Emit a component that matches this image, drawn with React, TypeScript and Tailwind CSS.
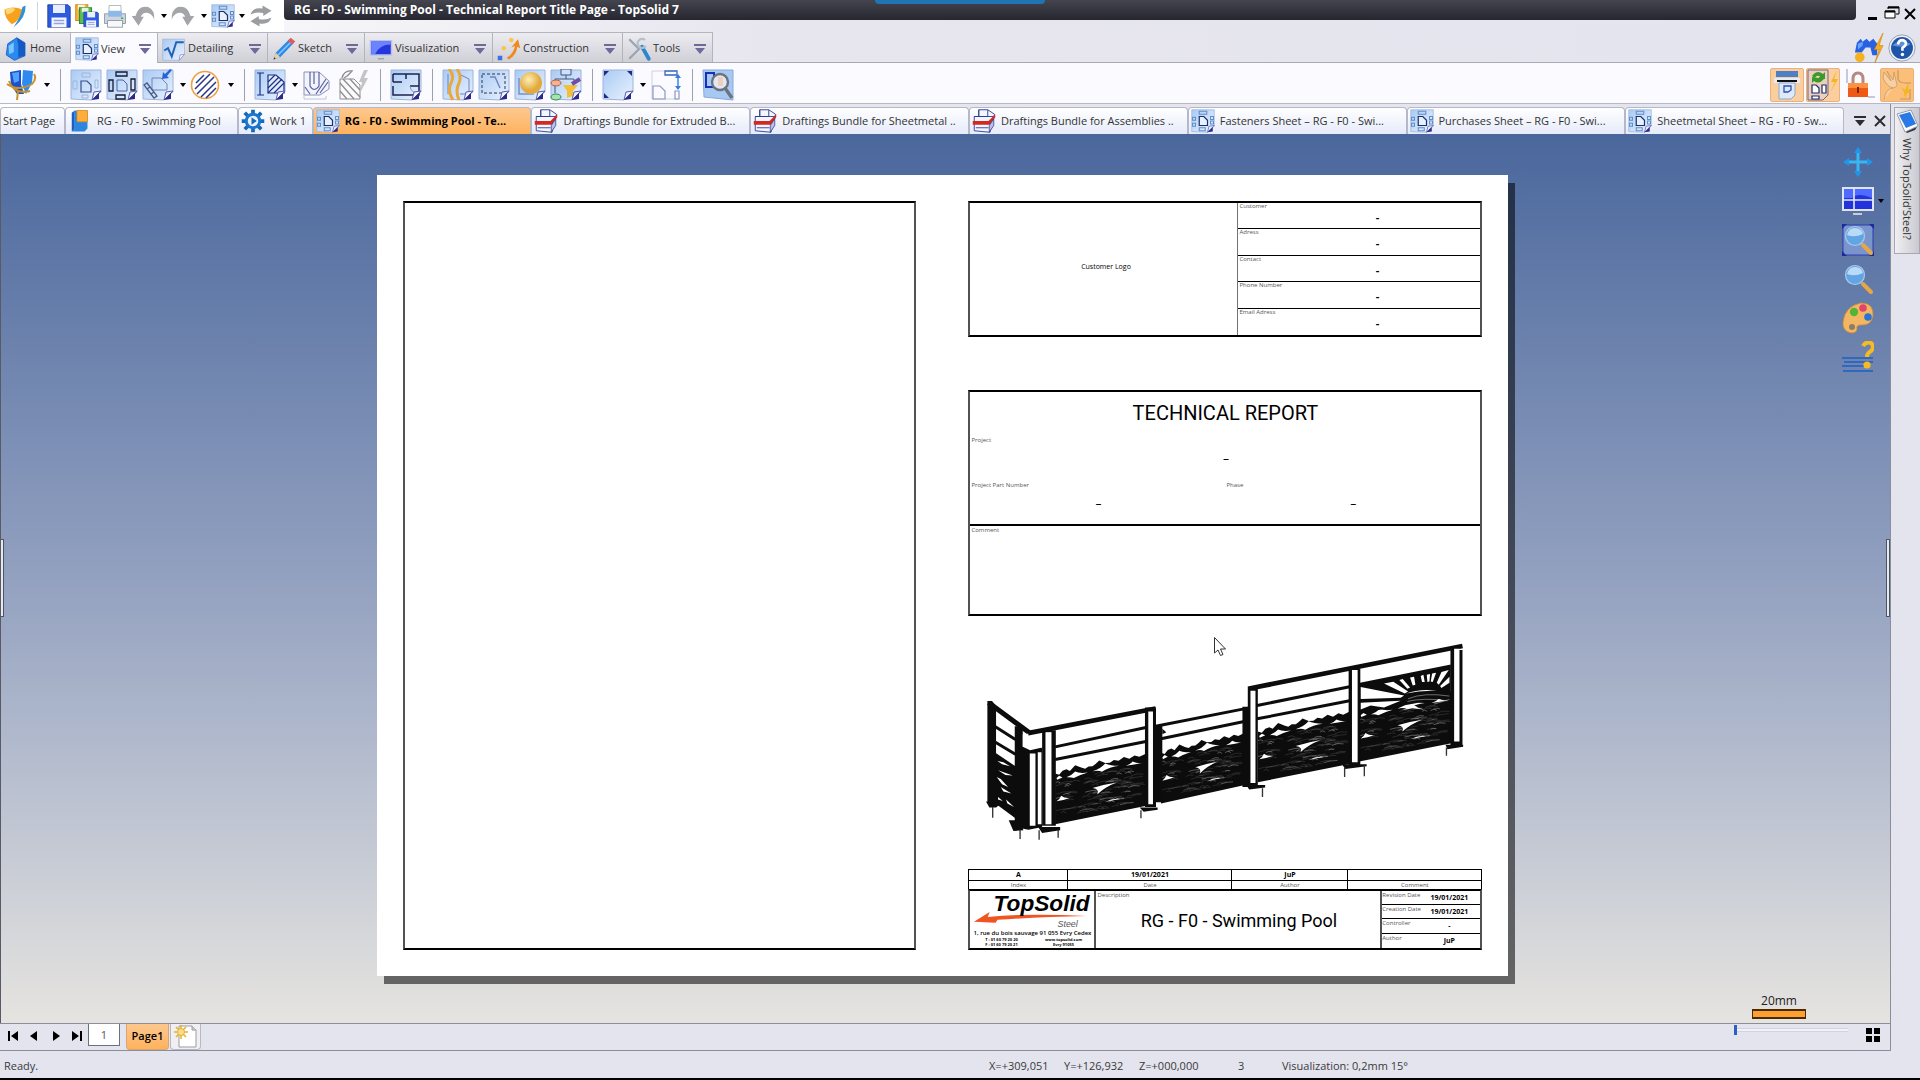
import React, { useState } from "react";

type IconProps = { className?: string; children?: React.ReactNode };

/* ---------- icons ---------- */

const Svg = ({ className = "size-8", children }: IconProps) => (
  <svg viewBox="0 0 32 32" className={`${className} shrink-0`} fill="none" aria-hidden="true">
    {children}
  </svg>
);

const Paper = ({ className, children }: IconProps) => (
  <Svg className={className}>
    <path d="M1 1H31V23L22 31L1 30Z" fill="url(#paper)" stroke="#9db4dc" />
    {children}
    <path d="M22 31L24 23L31 22Z" fill="#eef3ff" stroke="#5a5fb0" strokeWidth="1" />
    <path d="M22 31L29 24V30Z" fill="#2b2a86" />
  </Svg>
);

const DraftIcon = ({ className }: IconProps) => (
  <Paper className={className}>
    <path d="M11 3H21V7H11ZM11 25H19V29H11ZM2 11H6V15H2ZM2 19H6V23H2ZM26 10H30V14H26ZM26 16H30V20H26Z" stroke="#5f8fc9" strokeWidth="1.4" />
    <path d="M11 10H17L22 15V22H11Z" stroke="#1b2f6b" strokeWidth="1.6" fill="#e8f1ff" />
  </Paper>
);

const BundleIcon = () => (
  <Svg className="size-6">
    <path d="M9 1H21L30 7L24 31L3 29V10H9Z" fill="#f3f5ff" stroke="#2f3b8f" strokeWidth="1.2" />
    <path d="M9 1V10H21V1M3 10H28M5 25H22" stroke="#2f3b8f" strokeWidth="1.2" />
    <path d="M1 16H22L31 7V11L24 21H1Z" fill="#d42a1e" />
    <path d="M23 22L29 13V22L23 31Z" fill="#b9bfe8" stroke="#2f3b8f" />
  </Svg>
);

const GearIcon = () => (
  <Svg className="size-6">
    <g stroke="#1668b8" strokeWidth="5">
      <path d="M16 1V31M1 16H31M5 5L27 27M27 5L5 27" />
    </g>
    <circle cx="16" cy="16" r="11" fill="#1d76cc" />
    <circle cx="16" cy="16" r="7" fill="#e8f4ff" />
    <path d="M14 11L21 16L14 21Z" fill="#1668b8" />
  </Svg>
);

const BookIcon = () => (
  <Svg className="size-6">
    <path d="M5 5L9 2V27L5 30Z" fill="#1a5fc0" />
    <path d="M9 2H26V26L22 30H5L9 27Z" fill="#2c86e0" />
    <path d="M12 2H26V17H12Z" fill="#ffae3d" stroke="#e58a12" />
  </Svg>
);

const HomeIcon = () => (
  <Svg className="size-6">
    <path d="M5 9L17 1L28 8V25L14 31L3 24Z" fill="#2a8af0" stroke="#0f52b8" />
    <path d="M17 1L28 8V25L19 27V11Z" fill="#1559c4" />
    <path d="M6 12L13 7V20L7 23Z" fill="#7cc6ff" />
  </Svg>
);

const RootIcon = () => (
  <Svg className="size-6">
    <path d="M1 3H30V23L23 31H1Z" fill="url(#paper)" stroke="#9db4dc" />
    <path d="M3 18L8 15L13 26L19 7H29" stroke="#1f62b5" strokeWidth="2.6" />
    <path d="M23 31L24 24L30 23Z" fill="#fff" stroke="#7d86c8" />
  </Svg>
);

const PencilIcon = () => (
  <Svg className="size-6">
    <path d="M2 30L5 21L23 3L29 8L11 27Z" fill="#2c8be6" />
    <path d="M8 24L26 6" stroke="#8dc8ff" strokeWidth="2" />
    <path d="M21 5L25 1L31 6L27 10Z" fill="#e25a5a" />
    <path d="M2 30L5 21L11 27Z" fill="#ead0a0" />
    <path d="M2 30L3 27L5 29Z" fill="#333" />
  </Svg>
);

const ScreenIcon = () => (
  <Svg className="size-6">
    <path d="M1 4H31V25H1Z" fill="#b9c3ea" />
    <path d="M3 6H29V23H3Z" fill="#2536dd" />
    <path d="M3 6H29V10Q14 10 8 23H3Z" fill="#6b83ff" />
    <path d="M12 28H20V30H12Z" fill="#9aa" />
  </Svg>
);

const BuildIcon = () => (
  <Svg className="size-6">
    <path d="M13 28Q22 22 24 12L19 14L28 3L31 15L27 13Q26 24 16 30Z" fill="#f08a1d" />
    <circle cx="19" cy="4" r="3" fill="#f7c64a" />
    <circle cx="9" cy="15" r="3" fill="#f7c64a" />
    <path d="M1 25H7V31H1Z" fill="#3d6fe0" />
  </Svg>
);

const ToolsIcon = () => (
  <Svg className="size-6">
    <path d="M3 3L16 16L3 29" stroke="#9aa4b4" strokeWidth="3" />
    <path d="M20 13L29 29" stroke="#2b86cf" strokeWidth="5" strokeLinecap="round" />
    <path d="M24 4A6 6 0 1 0 25 12" stroke="#b9bec8" strokeWidth="3" />
  </Svg>
);

const LogoIcon = () => (
  <Svg className="h-7 w-[26px]">
    <path d="M3 8Q14 3 25 8Q24 21 12 26Q3 19 3 8Z" fill="#f7a11c" />
    <path d="M4 8Q10 5 16 7Q15 12 6 14Z" fill="#ffd777" />
    <path d="M29 3Q30 18 14 30Q24 16 25 5Z" fill="#2b93d6" />
  </Svg>
);

const Floppy = ({ x = 0, y = 0, s = 1, color = "#2c5be0" }) => (
  <g transform={`translate(${x} ${y}) scale(${s})`}>
    <path d="M1 1H28L31 4V31H1Z" fill={color} stroke="#1b338f" />
    <path d="M8 1H24V12H8Z" fill="#e9eefc" />
    <path d="M6 18H26V31H6Z" fill="#f4f7ff" />
    <path d="M9 22H23M9 26H23" stroke="#90a5dd" strokeWidth="2" />
  </g>
);

const SaveIcon = () => (
  <Svg className="size-6">
    <Floppy />
  </Svg>
);

const SaveAllIcon = () => (
  <Svg className="size-6">
    <path d="M1 1H17V22H1Z" fill="#f2b64a" stroke="#d68a1c" strokeWidth="1.5" />
    <path d="M4 1H13V7H4Z" fill="#fff3d6" />
    <path d="M6 5H22V26H6Z" fill="#5fbd55" stroke="#2f8f2f" strokeWidth="1.5" />
    <path d="M9 5H18V11H9Z" fill="#e2f6de" />
    <Floppy x={11} y={10} s={0.66} />
  </Svg>
);

const PrinterIcon = () => (
  <Svg className="size-6">
    <path d="M8 2H24V14H8Z" fill="#fff" stroke="#9aa" />
    <path d="M2 13H30V26H2Z" fill="#cfd5de" stroke="#7f8894" />
    <path d="M7 9H25V17H7Z" fill="#8fb8ea" />
    <path d="M6 22H26V31H6Z" fill="#f6f8fa" stroke="#7f8894" />
    <path d="M24 18H27V20H24Z" fill="#3fae3f" />
  </Svg>
);

const UndoIcon = ({ flip = false }) => (
  <Svg className={flip ? "size-6 -scale-x-100" : "size-6"}>
    <path d="M1 16L10 29L17 17L13 17Q16 10 23 12Q29 14 31 21Q32 8 23 4Q10 1 6 16Z" fill="#a3a5a8" />
  </Svg>
);

const RefreshIcon = () => (
  <Svg className="size-6">
    <path d="M2 14Q5 4 18 6V2L30 9L19 16V12Q9 10 2 14Z" fill="#9b9da0" />
    <path d="M30 18Q27 28 14 26V30L2 23L13 16V20Q23 22 30 18Z" fill="#9b9da0" />
  </Svg>
);

const ClampIcon = () => (
  <Svg>
    <path d="M4 3L15 1V15L18 25H11L5 16Z" fill="#1e4fc8" />
    <path d="M17 1L27 2L26 14L20 25L16 15Z" fill="#2f8af0" />
    <path d="M6 4L13 3V12L8 14Z" fill="#4da4ff" />
    <path d="M1 15Q12 23 26 15Q31 10 28 5M12 22L11 31M3 12Q8 26 24 22" stroke="#c89227" strokeWidth="2" />
  </Svg>
);

const PaperMain = () => (
  <Paper>
    <path d="M12 4H20V8H12ZM3 12H7V20H3ZM12 26H18V29H12ZM25 11H28V19H25Z" stroke="#9cb6dd" />
    <path d="M11 12H17L21 16V23H11Z" stroke="#38508f" strokeWidth="1.2" />
  </Paper>
);

const PaperViews = () => (
  <Paper>
    <path d="M10 3H21V7H10ZM3 11H7V22H3ZM10 26H19V30H10ZM25 10H29V21H25Z" stroke="#141b33" strokeWidth="1.3" />
    <path d="M11 11H17L21 15V22H11Z" stroke="#4b64a8" />
  </Paper>
);

const PaperAux = () => (
  <Paper>
    <path d="M10 9H19L25 15V21H10Z" stroke="#6c84bb" />
    <path d="M2 16L5 14L15 27L12 29ZM5 20L8 18M9 25L12 23" stroke="#4c5b86" strokeWidth="1.3" />
    <path d="M30 1L25 7L27 9L20 10L21 3L23 5L28 0Z" fill="#2466d8" />
  </Paper>
);

const HatchCircle = () => (
  <Svg>
    <circle cx="15" cy="16" r="13.5" stroke="#f0a040" strokeWidth="1.6" fill="#fff" />
    <path d="M6 14L14 6M5 20L20 5M7 25L24 8M11 28L26 13M16 29L26 19" stroke="#27358c" strokeWidth="1.5" />
  </Svg>
);

const SectionIcon = () => (
  <Paper>
    <path d="M3 4H10M3 26H10M6 4V26" stroke="#1c2f86" strokeWidth="1.2" />
    <path d="M14 6H22L30 13V24H14Z" fill="#dfe9ff" stroke="#1c2f86" strokeWidth="1.2" />
    <path d="M14 13L21 6M14 19L25 8M14 24L28 10M20 24L30 14" stroke="#1c2f86" strokeWidth="1.2" />
  </Paper>
);

const CutIcon = () => (
  <Svg>
    <path d="M2 3H17L27 12V20L18 26H2Z" fill="#f2f3fb" stroke="#8b90ba" />
    <path d="M8 3V17Q12 24 17 17V3M12 3V15M3 18L8 25M18 24L26 13M14 25L24 10" stroke="#5b61a4" strokeWidth="1.2" />
    <path d="M2 26V30H24V27" stroke="#c0c3da" />
  </Svg>
);

const GreyHatchIcon = () => (
  <Svg>
    <path d="M2 10H16L22 16V30H2Z" stroke="#8d8d8d" />
    <path d="M2 14L16 30M2 22L9 30M5 10L22 28M12 10L22 21M4 9Q6 1 14 2Q10 7 6 9" stroke="#8d8d8d" strokeWidth="1.3" />
    <path d="M30 1L26 9H30L22 24L24 13H21L26 1Z" fill="#c4c4c4" />
  </Svg>
);

const PlanIcon = () => (
  <Paper>
    <path d="M3 5H29V26H3V17M3 13V5M3 13H12M16 5V10M20 17H29" stroke="#1c2250" strokeWidth="1.5" />
    <path d="M20 17Q21 24 28 24" stroke="#7f95cc" />
  </Paper>
);

const BreakIcon = () => (
  <Paper>
    <path d="M17 5L27 10V25H18M6 5V25" stroke="#6d83c0" />
    <path d="M7 0Q13 6 9 14Q5 22 11 31M15 0Q20 7 17 14Q13 22 17 31" stroke="#e9a93a" strokeWidth="3" />
  </Paper>
);

const DashedIcon = () => (
  <Paper>
    <path d="M4 5H27V24H4Z" stroke="#30364f" strokeDasharray="3 2" />
    <path d="M12 8H17L22 19" stroke="#6d83c0" strokeWidth="1.4" />
  </Paper>
);

const SphereIcon = () => (
  <Paper>
    <path d="M5 9V25H20" stroke="#7a90c9" strokeWidth="1.5" />
    <circle cx="17" cy="14" r="11" fill="url(#gold)" />
  </Paper>
);

const FlowIcon = () => (
  <Paper>
    <path d="M11 0H21V6H11ZM16 6V10M5 10H24V15M5 10V24" stroke="#3f567f" fill="#cfe0fa" />
    <ellipse cx="6" cy="14" rx="5" ry="3" fill="#f3b294" stroke="#b8613c" />
    <ellipse cx="6" cy="28" rx="5" ry="3" fill="#a6e2b2" stroke="#328c4c" />
    <path d="M13 16H28L23 22V27L17 29V22Z" fill="#f3bf38" />
    <path d="M22 15L30 10" stroke="#6d4ea8" strokeWidth="4" />
  </Paper>
);

const FrameIcon = () => (
  <Paper>
    <path d="M2 2H7L2 7ZM30 2V7L25 2ZM2 29V24L7 29Z" fill="#1f2b86" />
  </Paper>
);

const MoveTitleIcon = () => (
  <Svg>
    <path d="M2 2V30H28M2 2H16" stroke="#cfcfe0" />
    <path d="M15 2H27V6H15Z" stroke="#3563c4" strokeWidth="1.3" />
    <path d="M28 6V19" stroke="#2f7de0" strokeWidth="1.4" />
    <path d="M25 9L28 5L31 9ZM25 17L28 21L31 17Z" fill="#2f7de0" />
    <path d="M3 17H10L15 22V30H3ZM25 22H29V30H25Z" stroke="#8798c6" strokeWidth="1.2" />
  </Svg>
);

const InspectIcon = () => (
  <Svg>
    <path d="M1 1H31V31L2 28Z" fill="#a8c8f4" stroke="#86a8dc" />
    <path d="M4 4H12V18H4Z" stroke="#1631b8" strokeWidth="2" />
    <circle cx="18" cy="13" r="8" fill="#dfe9f6" stroke="#6c737c" strokeWidth="2.4" />
    <path d="M16 8H21V17H16Z" fill="#f2cdbb" />
    <path d="M23 19L30 29" stroke="#6c737c" strokeWidth="3.4" />
  </Svg>
);

const PlotterIcon = () => (
  <Svg>
    <path d="M5 2H27V8H5Z" fill="#4c7fc6" />
    <path d="M3 9H29V14H3Z" fill="#e6ecf4" />
    <path d="M6 11H26V13H6Z" fill="#111" />
    <path d="M8 14H24V26L20 30H8Z" fill="#dceafc" stroke="#90a8cc" />
    <path d="M13 17H20V21L17 23H13Z" stroke="#2c4db0" strokeWidth="1.3" />
  </Svg>
);

const AutoUpdateIcon = () => (
  <Svg>
    <path d="M1 1H21V26L16 31H1Z" fill="#ead0b8" stroke="#6f6690" />
    <path d="M5 7Q10 0 16 5L18 3V10H11L13 7Q9 6 8 9ZM17 10Q12 16 7 12L5 14V8Z" fill="#3c9a2c" />
    <path d="M5 16H9L12 19V24H5ZM15 16H19V24H15ZM5 27H12V30H5Z" stroke="#1c2a70" strokeWidth="1.2" fill="#fff" />
    <path d="M30 1L24 13H28L23 24L31 10H27Z" fill="#f5b51f" />
  </Svg>
);

const LockIcon = () => (
  <Svg>
    <path d="M3 0V14M24 28H31" stroke="#8f94c8" />
    <path d="M9 15V10Q9 4 14 4Q19 4 19 10V15" stroke="#b58a82" strokeWidth="3" />
    <path d="M4 14H24V28H4Z" fill="#ee5a12" />
    <path d="M4 14H24V19H4Z" fill="#ff9142" />
    <path d="M13 18H15V24H13Z" fill="#7a2500" />
  </Svg>
);

const HandsIcon = () => (
  <Svg>
    <path d="M3 3L10 12L6 2L12 11L13 3L15 12Q18 18 12 19Q6 18 2 9ZM3 31Q4 20 12 19" fill="#f6cfa2" stroke="#d3a26c" />
    <path d="M17 1V10Q18 15 30 14M19 30H29V20" stroke="#c79665" strokeWidth="1.2" />
    <path d="M20 18L24 21L28 13L27 21L31 24L26 24L24 29L23 23Z" fill="#f5b51f" />
  </Svg>
);

const BinocularBolt = () => (
  <Svg className="size-[31px]">
    <path d="M2 20L4 10L8 6L10 9L14 6L17 9L21 6L25 11V23H20L18 15L13 15L9 20Z" fill="#2862e0" />
    <path d="M5 11L10 9V13L5 17Z" fill="#69a4ff" />
    <circle cx="7" cy="25" r="5" fill="#f6b21e" />
    <path d="M31 0L22 17H27L22 32L31 13H27Z" fill="#f7ae1c" stroke="#c9820b" strokeWidth=".6" />
  </Svg>
);

const HelpIcon = () => (
  <Svg className="size-7">
    <circle cx="16" cy="16" r="15" fill="#eef2f8" stroke="#8d97aa" />
    <circle cx="16" cy="16" r="12.5" fill="#1e55a8" />
    <path d="M5 13Q12 5 26 11Q20 17 5 13" fill="#5f90d6" />
    <path d="M11.5 12Q12 7 16.5 7Q21 8 20.5 12Q19 14 16.5 16V19" stroke="#fff" strokeWidth="3" />
    <circle cx="16.5" cy="23.5" r="2" fill="#fff" />
  </Svg>
);

const PlusArrows = () => (
  <Svg>
    <path d="M14.5 6H17.5V14.5H26V17.5H17.5V26H14.5V17.5H6V14.5H14.5Z" fill="#36b6f5" />
    <path d="M16 1L20 7H12ZM16 31L20 25H12ZM1 16L7 12V20ZM31 16L25 12V20Z" fill="#2196e8" />
  </Svg>
);

const MonitorGrid = () => (
  <Svg>
    <path d="M0 2H32V26H0Z" fill="#dfe4f4" />
    <path d="M2 4H30V24H2Z" fill="#2333dc" />
    <path d="M2 4H30V13Q16 7 10 13H2Z" fill="#4f6bff" />
    <path d="M12 4V24M2 15H30" stroke="#e4eaff" strokeWidth="1.6" />
    <path d="M11 28H20V30H11Z" fill="#c8ccd4" />
  </Svg>
);

const Magnifier = ({ framed = false }) => (
  <Svg>
    {framed && <path d="M1 1H31V31H1Z" fill="#7a95cc" stroke="#2c3bb0" />}
    {framed && <path d="M0 0H5L0 5ZM32 0V5L27 0ZM0 32V27L5 32ZM32 32H27L32 27Z" fill="#1d2a9c" />}
    <path d="M21 21L29 29" stroke="#e5a844" strokeWidth="4" strokeLinecap="round" />
    <circle cx="13" cy="12" r="9.5" fill="#62a5e4" stroke="#a9c8ea" strokeWidth="1.2" />
    <path d="M5 11Q7 3 14 4Q20 5 21 10Q13 14 5 11Z" fill="#b9dbf7" />
  </Svg>
);

const PaletteIcon = () => (
  <Svg>
    <path d="M1 20Q3 4 19 1Q32 1 31 14Q29 24 19 23Q14 23 15 27Q15 31 9 31Q0 29 1 20Z" fill="#f3b763" stroke="#c98932" strokeWidth=".8" />
    <circle cx="12" cy="10" r="4.2" fill="#54b436" />
    <circle cx="21" cy="6" r="3.8" fill="#e2456a" />
    <circle cx="26" cy="15" r="3.8" fill="#2a74d6" />
    <circle cx="10" cy="25" r="3" fill="#8f7c66" />
  </Svg>
);

const HelpLines = () => (
  <Svg>
    <path d="M0 17H31M2 21H31M0 25H28M1 30H31" stroke="#1b5fc2" strokeWidth="1.6" />
    <path d="M21 5Q24 0 29 2Q33 6 29 10Q25 12 25 16" stroke="#f6bb22" strokeWidth="4" />
    <circle cx="25" cy="24" r="3.6" fill="#f6bb22" />
  </Svg>
);

const Menu = ({ wide = false }) =>
  wide ? (
    <svg viewBox="0 0 12 10" className="h-[10px] w-3 shrink-0" aria-hidden="true">
      <path d="M0 0H12V2H0ZM1 4H11L6 10Z" fill="currentColor" />
    </svg>
  ) : (
    <svg viewBox="0 0 6 4" className="h-1 w-1.5 shrink-0" aria-hidden="true">
      <path d="M0 0H6L3 4Z" fill="#000" />
    </svg>
  );

/* ---------- ribbon ---------- */

const ribbonTabs = [
  { name: "Home", icon: <HomeIcon />, width: "w-[71px]", menu: false },
  { name: "View", icon: <DraftIcon className="size-6" />, width: "w-[87px]", menu: true },
  { name: "Detailing", icon: <RootIcon />, width: "w-[110px]", menu: true },
  { name: "Sketch", icon: <PencilIcon />, width: "w-[97px]", menu: true },
  { name: "Visualization", icon: <ScreenIcon />, width: "w-[128px]", menu: true },
  { name: "Construction", icon: <BuildIcon />, width: "w-[130px]", menu: true },
  { name: "Tools", icon: <ToolsIcon />, width: "w-[90px]", menu: true },
];

const toolGroups = [
  [{ name: "Selection", icon: <ClampIcon />, menu: true }],
  [
    { name: "Main view", icon: <PaperMain /> },
    { name: "Projected views", icon: <PaperViews /> },
    { name: "Auxiliary view", icon: <PaperAux />, menu: true },
    { name: "Detail view", icon: <HatchCircle />, menu: true },
  ],
  [
    { name: "Section view", icon: <SectionIcon />, menu: true },
    { name: "Local section", icon: <CutIcon /> },
    { name: "Update hatching", icon: <GreyHatchIcon /> },
  ],
  [{ name: "Plan view", icon: <PlanIcon /> }],
  [
    { name: "Broken view", icon: <BreakIcon /> },
    { name: "Crop view", icon: <DashedIcon /> },
    { name: "Shaded view", icon: <SphereIcon /> },
    { name: "View filter", icon: <FlowIcon /> },
  ],
  [
    { name: "Sheet format", icon: <FrameIcon />, menu: true },
    { name: "Move title", icon: <MoveTitleIcon /> },
  ],
  [{ name: "Inspect", icon: <InspectIcon /> }],
];

const docTabs = [
  { name: "Start Page", icon: null, width: "w-[65px]" },
  { name: "RG - F0 - Swimming Pool", icon: <BookIcon />, width: "w-[173px]" },
  { name: "Work 1", icon: <GearIcon />, width: "w-[75px]" },
  { name: "RG - F0 - Swimming Pool - Te...", icon: <DraftIcon className="size-6" />, width: "w-[219px]" },
  { name: "Draftings Bundle for Extruded B...", icon: <BundleIcon />, width: "w-[219px]" },
  { name: "Draftings Bundle for Sheetmetal ..", icon: <BundleIcon />, width: "w-[219px]" },
  { name: "Draftings Bundle for Assemblies ..", icon: <BundleIcon />, width: "w-[219px]" },
  { name: "Fasteners Sheet – RG - F0 - Swi...", icon: <DraftIcon className="size-6" />, width: "w-[219px]" },
  { name: "Purchases Sheet – RG - F0 - Swi...", icon: <DraftIcon className="size-6" />, width: "w-[219px]" },
  { name: "Sheetmetal Sheet – RG - F0 - Sw...", icon: <DraftIcon className="size-6" />, width: "w-[219px]" },
];

const TitleBar = () => (
  <header className="flex h-8 items-start">
    <div className="flex h-8 w-[284px] shrink-0 items-center bg-white pl-0.5">
      <LogoIcon />
      <span className="mx-[9px] h-7 w-px bg-gray-300" />
      <div className="flex items-center gap-1">
        <button aria-label="Save"><SaveIcon /></button>
        <button aria-label="Save all"><SaveAllIcon /></button>
        <button aria-label="Print"><PrinterIcon /></button>
        <button aria-label="Undo" className="flex items-center gap-1.5"><UndoIcon /><Menu /></button>
        <button aria-label="Redo" className="flex items-center gap-1.5"><UndoIcon flip /><Menu /></button>
        <button aria-label="Drafting" className="flex items-center gap-1"><DraftIcon className="size-6" /><Menu /></button>
        <button aria-label="Refresh"><RefreshIcon /></button>
      </div>
    </div>
    <div className="relative flex h-5 flex-1 justify-start rounded-b-sm bg-linear-to-b from-[#45454f] to-[#262631] pl-2.5">
      <h1 className="text-xs leading-5 font-bold whitespace-nowrap text-white">
        RG - F0 - Swimming Pool - Technical Report Title Page - TopSolid 7
      </h1>
      <span className="absolute top-0 left-[37.6%] h-1 w-[170px] rounded-b-sm bg-[#1f74b4]" />
    </div>
    <div className="flex h-6 w-16 shrink-0 items-end justify-end gap-1 pr-1 pb-1">
      <button aria-label="Minimize" className="flex h-4 w-3 items-end"><span className="h-[3px] w-[9px] bg-black" /></button>
      <button aria-label="Restore">
        <svg viewBox="0 0 16 14" className="h-[14px] w-4" fill="none" stroke="#000" aria-hidden="true">
          <path d="M4 3V1H15V8H12" />
          <path d="M1 5H11V12H1Z" fill="#fff" />
          <path d="M4 1.5H15M1 5.5H11" strokeWidth="2" />
        </svg>
      </button>
      <button aria-label="Close">
        <svg viewBox="0 0 12 12" className="size-3" stroke="#000" strokeWidth="2" aria-hidden="true">
          <path d="M1 1L11 11M11 1L1 11" />
        </svg>
      </button>
    </div>
  </header>
);

const Ribbon = () => {
  const [active, setActive] = useState("View");

  return (
    <nav className="flex h-[31px] items-stretch border-b border-[#a9a9b3]">
      {ribbonTabs.map((tab) => (
        <button
          key={tab.name}
          onClick={() => setActive(tab.name)}
          className={`${tab.width} ${
            active === tab.name ? "-mb-px bg-[#fbfbff]" : "bg-linear-to-b from-[#ececf1] to-[#cfcfd6]"
          } flex shrink-0 items-center border-t border-r border-[#b4b4bd] pt-0.5 pr-1.5 pl-1`}
        >
          {tab.icon}
          <span className="ml-0.5">{tab.name}</span>
          {tab.menu && <span className="ml-auto text-[#6c6a99]"><Menu wide /></span>}
        </button>
      ))}
      <div className="ml-auto flex items-center gap-1 pt-0.5 pr-1">
        <button aria-label="Search"><BinocularBolt /></button>
        <button aria-label="Help"><HelpIcon /></button>
      </div>
    </nav>
  );
};

const Toolbar = () => (
  <div className="flex h-[41px] items-center border-b border-[#b9b9c4] bg-[#fbfbff] pt-[3px] pl-1.5">
    {toolGroups.map((group, i) => (
      <div key={i} className="flex items-center gap-1">
        {i > 0 && <span className="mr-[5px] ml-2.5 h-8 w-px bg-gray-400" />}
        {group.map((tool: { name: string; icon: React.ReactNode; menu?: boolean }) => (
          <button key={tool.name} aria-label={tool.name} className="flex items-center gap-1.5">
            {tool.icon}
            {tool.menu && <Menu />}
          </button>
        ))}
      </div>
    ))}
    <div className="ml-auto flex items-center gap-0.5 pr-1.5">
      <button aria-label="Print preview" className="rounded-xs border border-[#e9b27c] bg-[#fbcf9d]"><PlotterIcon /></button>
      <button aria-label="Auto update" className="rounded-xs border border-[#e9b27c] bg-[#fbcf9d]"><AutoUpdateIcon /></button>
      <button aria-label="Lock" className="px-0.5"><LockIcon /></button>
      <button aria-label="Associativity" className="rounded-xs border border-[#e9b27c] bg-[#fbbf7a]"><HandsIcon /></button>
    </div>
  </div>
);

const DocumentTabs = () => {
  const [active, setActive] = useState(3);

  return (
    <div className="flex h-[30px] items-end">
      {docTabs.map((tab, i) => (
        <button
          key={i}
          onClick={() => setActive(i)}
          className={`${tab.width} ${
            i === active
              ? "bg-linear-to-b from-[#fdc88e] to-[#ffb25c] font-bold text-black"
              : "bg-linear-to-b from-white to-[#e6ebfa]"
          } flex h-[27px] shrink items-center gap-[5px] overflow-hidden rounded-t-sm border border-b-0 border-[#b4b8c8] pl-0.5 whitespace-nowrap`}
        >
          {tab.icon}
          {tab.name}
        </button>
      ))}
      <div className="flex h-[27px] shrink-0 items-center gap-2 pr-1 pl-2.5 text-[#2c2c33]">
        <button aria-label="List documents"><Menu wide /></button>
        <button aria-label="Close document">
          <svg viewBox="0 0 12 12" className="size-3" stroke="currentColor" strokeWidth="2" aria-hidden="true">
            <path d="M1 1L11 11M11 1L1 11" />
          </svg>
        </button>
      </div>
    </div>
  );
};

/* ---------- fence drawing ---------- */

// small fixed generator so the water looks the same on each render
const ripples = (() => {
  let seed = 11;
  const next = () => {
    seed = (seed * 16807) % 2147483647;
    return seed / 2147483647;
  };
  return Array.from({ length: 100 }, () => ({
    x: Math.round(next() * 230),
    y: Math.round(22 + next() * 110),
    w: Math.round(14 + next() * 30),
    h: Math.round(2 + next() * 5),
  }));
})();

const Waves = ({ x, y, width = 270 }: { x: number; y: number; width?: number }) => (
  <g transform={`translate(${x} ${y}) scale(${width / 270} 1) skewY(-11.5)`}>
    <path
      d="M0 -4L12 2L22 -8L34 -10L44 -3Q52 -10 60 -17L78 -6L90 0L100 -5L112 -3Q122 -8 132 -16L150 -5L164 -3L176 -9L190 -4L206 -12L222 -3L238 -10L252 -3L270 -8V148H0Z"
      fill="#0c0c0c"
    />
    <g fill="#fff">
      <path d="M34 14Q52 10 60 2Q72 11 98 13Q74 15 56 21Q46 15 34 14Z" />
      <path d="M112 12Q134 10 150 -4Q166 7 192 12Q164 10 140 19Q130 12 112 12Z" />
      <path d="M112 62Q150 58 184 60Q150 66 126 84Q134 70 112 62Z" />
      <path d="M4 80Q14 76 18 66Q28 76 46 78Q22 82 4 80Z" />
      <path d="M4 10L12 5L22 12L6 16Z" />
      <path d="M212 16Q226 14 232 7Q244 16 262 18Q236 18 212 16Z" />
      <path d="M150 112Q172 104 196 112Q172 110 150 112Z" />
    </g>
    <g fill="none" stroke="#e8e8e8" strokeWidth="1.1">
      {ripples.map((r, i) => (
        <path key={i} d={`M${r.x} ${r.y}q${r.w / 2} ${-r.h} ${r.w} ${r.h / 2}`} opacity={i % 5 === 0 ? 0.9 : 0.35} />
      ))}
    </g>
  </g>
);

const Fence = () => (
  <svg viewBox="0 0 1539 660" className="w-full" role="img" aria-label="Fence">
    <g transform="translate(6 0)">
      <Waves x={255} y={434} />
      <Waves x={572} y={372} width={248} />
      <Waves x={862} y={308} width={274} />
      <Waves x={1166} y={246} width={276} />

      {/* sun panel */}
      <path d="M1168 158L1440 103V200L1168 250Z" fill="#0c0c0c" />
      <g fill="#fff">
        <path d="M1170 171L1300 196L1290 203L1170 207Z" />
        <path d="M1240 160L1268 155L1312 184L1302 190Z" />
        <path d="M1170 218L1290 212L1240 232L1200 226L1170 238Z" />
        <path d="M1286 150L1296 147L1318 172L1310 176ZM1318 142L1330 140L1334 164L1326 166ZM1350 138L1358 134L1362 156L1354 156ZM1368 134L1378 132L1376 154L1370 156ZM1384 130L1396 128L1386 156L1380 154ZM1412 126L1434 120L1404 164L1398 158Z" />
        <path d="M1436 140V158L1412 174L1408 168Z" />
        <path d="M1306 190Q1350 174 1398 182Q1350 180 1306 190Z" />
        <path d="M1292 240Q1316 234 1328 224Q1340 234 1360 238L1326 234Z" />
      </g>
      <path d="M1312 206Q1360 186 1436 198M1310 214Q1360 202 1430 212M1390 222L1436 208" fill="none" stroke="#ccc" strokeWidth="1.5" />

      {/* side return */}
      <path d="M76 368L136 408V564L76 520Z" fill="#0c0c0c" />
      <g fill="#fff">
        <path d="M82 392L100 396L120 408L96 402ZM80 440L92 446L114 470L96 462ZM92 470L124 490L100 484ZM84 420L128 436L106 434ZM108 508L132 530L112 520ZM84 500L98 512L84 508Z" />
      </g>
      <path d="M52 213H66L78 228V520H52Z" fill="#0c0c0c" />
      <path d="M76 290L136 328M76 336L136 372" stroke="#0c0c0c" strokeWidth="9" />
      <path d="M56 218L178 308" stroke="#0c0c0c" strokeWidth="15" />
      <path d="M48 514H78L90 522L78 532H58Z" fill="#0c0c0c" />

      {/* corner posts */}
      <path d="M134 288H158V350L216 352V590L175 598L134 590Z" fill="#0c0c0c" />
      <path d="M158 312L216 306V352L180 360L158 350Z" fill="#fff" />
      <path d="M179 370H196V586H179ZM203 366H214V582H203Z" fill="#fff" />
      <path d="M216 300H257V586H216Z" fill="#0c0c0c" />
      <path d="M226 306H244V582H226Z" fill="#fff" />
      <path d="M116 570H150L160 600L130 602ZM204 590H270V600L216 608Z" fill="#0c0c0c" />

      {/* rails */}
      <g stroke="#0c0c0c" strokeWidth="9" fill="none">
        <path d="M255 350L527 292M255 388L527 334" />
        <path d="M556 288L832 234M572 326L832 272" />
        <path d="M860 226L1137 170M860 266L1137 212" />
      </g>
      <g stroke="#0c0c0c" strokeWidth="14" fill="none">
        <path d="M174 309L556 235M833 176L1475 48" />
      </g>

      {/* posts */}
      <path d="M524 232H557V530H524ZM556 284L576 288V516H556ZM816 230H834V470H816ZM832 172H862V468H832ZM1134 116H1169V404H1134ZM1439 60H1475V348H1439Z" fill="#0c0c0c" />
      <path d="M534 244H548V522H534ZM840 182H855V458H840ZM1144 120H1161V396H1144ZM1450 56H1466V334H1450Z" fill="#fff" />
      <path d="M576 296L588 306L576 312ZM508 532H562V538L520 544ZM828 464H884V472L836 478ZM1114 402H1188V408L1124 416ZM1424 344H1477V350L1430 357Z" fill="#0c0c0c" />
      <path d="M68 530V562M150 598V626M207 600V628M264 598V622M512 540V564M876 474V500M1122 412V440M1181 406V438M1427 352V377" stroke="#333" strokeWidth="4" />
    </g>
  </svg>
);

/* ---------- sheet ---------- */

const Caption = ({ children }: { children: React.ReactNode }) => (
  <span className="text-[6px] leading-[8px] text-[#555]">{children}</span>
);

const Customer = () => (
  <section className="grid h-[136px] grid-cols-[267px_1fr] border-2 border-x-neutral-600 border-y-black">
    <div className="flex items-center justify-center pb-1 pl-1 text-[7px]">Customer Logo</div>
    <dl className="grid grid-rows-5 divide-y divide-black border-l border-neutral-500">
      {["Customer", "Adress", "Contact", "Phone Number", "Email Adress"].map((field) => (
        <div key={field} className="flex flex-col">
          <dt className="flex h-1.5 items-center pl-px"><Caption>{field}</Caption></dt>
          <dd className="pl-9 text-center leading-4 font-bold">-</dd>
        </div>
      ))}
    </dl>
  </section>
);

const Report = () => (
  <section className="mt-[53px] border-2 border-x-neutral-600 border-y-black">
    <div className="grid h-[134px] grid-cols-2 grid-rows-[44px_44px_45px] border-b-2 border-black">
      <h2 className="col-span-2 text-center font-[Roboto] text-xl leading-[42px]">TECHNICAL REPORT</h2>
      <div className="col-span-2 flex flex-col pl-px">
        <Caption>Project</Caption>
        <span className="text-center text-xs leading-[30px]">–</span>
      </div>
      <div className="flex flex-col pt-px pl-px">
        <Caption>Project Part Number</Caption>
        <span className="text-center text-xs leading-[30px]">–</span>
      </div>
      <div className="flex flex-col pt-px pl-px">
        <Caption>Phase</Caption>
        <span className="text-center text-xs leading-[30px]">–</span>
      </div>
    </div>
    <div className="flex h-[88px] flex-col pl-px">
      <Caption>Comment</Caption>
    </div>
  </section>
);

const CompanyLogo = () => (
  <div className="flex flex-col items-center border-r-2 border-neutral-600">
    <svg viewBox="0 0 126 38" className="h-[38px] w-full shrink-0" role="img" aria-label="TopSolid Steel">
      <path d="M4 31L20 21L18 26Q60 22 118 25Q70 26 28 29L26 32Z" fill="#ef5423" />
      <text x="24" y="20" fontFamily="Liberation Sans" fontStyle="italic" fontWeight="bold" fontSize="23">TopSolid</text>
      <text x="89" y="36" fontFamily="Liberation Sans" fontStyle="italic" fontSize="9" fill="#555">Steel</text>
    </svg>
    <p className="text-[6px] leading-[8px] font-semibold whitespace-nowrap">1, rue du bois sauvage 91 055 Evry Cedex</p>
    <div className="grid w-full grid-cols-2 text-center text-[4px] leading-[5px] font-bold">
      <span>T : 01 60 79 20 20<br />F : 01 60 79 20 21</span>
      <span>www.topsolid.com<br />Evry 91055</span>
    </div>
  </div>
);

const TitleBlock = () => (
  <section className="mt-auto">
    <table className="w-full table-fixed border-collapse text-center">
      <colgroup>
        <col className="w-[99px]" />
        <col className="w-[164px]" />
        <col className="w-[116px]" />
        <col />
      </colgroup>
      <tbody className="text-[7px] leading-[10px] font-bold">
        <tr>
          {["A", "19/01/2021", "JuP", ""].map((value, i) => (
            <td key={i} className="h-[11px] border border-black p-0">{value}</td>
          ))}
        </tr>
      </tbody>
      <tfoot className="text-[6px] leading-[8px] text-[#555]">
        <tr>
          {["Index", "Date", "Author", "Comment"].map((label) => (
            <th key={label} className="border border-b-0 border-black p-0 font-normal">{label}</th>
          ))}
        </tr>
      </tfoot>
    </table>
    <div className="grid h-[61px] grid-cols-[126px_1fr_100px] border-2 border-x-neutral-600 border-y-black">
      <CompanyLogo />
      <div className="flex flex-col pl-px">
        <Caption>Description</Caption>
        <p className="pt-2 text-center font-[Roboto] text-lg leading-7 whitespace-nowrap">RG - F0 - Swimming Pool</p>
      </div>
      <dl className="grid grid-rows-4 divide-y divide-black border-l-2 border-neutral-600">
        {[
          ["Revision Date", "19/01/2021"],
          ["Creation Date", "19/01/2021"],
          ["Controller", "-"],
          ["Author", "JuP"],
        ].map(([label, value]) => (
          <div key={label} className="flex items-start">
            <dt className="w-9 shrink-0 text-[6px] leading-[8px] whitespace-nowrap text-[#555]">{label}</dt>
            <dd className="flex-1 pt-px text-center text-[7px] leading-[12px] font-bold">{value}</dd>
          </div>
        ))}
      </dl>
    </div>
  </section>
);

const Sheet = () => (
  <article className="relative grid aspect-[1132/801] w-[60.1%] grid-cols-2 gap-[52px] bg-white p-[26px] text-black shadow-[7px_8px_0_rgba(0,0,0,0.55)]">
    <div className="border-2 border-x-neutral-600 border-y-black" />
    <div className="flex min-w-0 flex-col">
      <Customer />
      <Report />
      <div className="pt-[14px]">
        <Fence />
      </div>
      <TitleBlock />
    </div>
    <svg viewBox="0 0 12 19" className="absolute top-[57.7%] left-[74%] h-[19px] w-3" fill="#fff" stroke="#333" aria-hidden="true">
      <path d="M.5 .5V16L4 13L6.5 18.5L9 17.5L6.5 12H11.5Z" />
    </svg>
  </article>
);

const ViewTools = () => (
  <div className="absolute top-3 right-2 flex w-10 flex-col gap-[7px]">
    <button aria-label="Pan"><PlusArrows /></button>
    <button aria-label="Views" className="flex items-center gap-1"><MonitorGrid /><Menu /></button>
    <button aria-label="Zoom window"><Magnifier framed /></button>
    <button aria-label="Zoom"><Magnifier /></button>
    <button aria-label="Colors"><PaletteIcon /></button>
    <button aria-label="Assistant"><HelpLines /></button>
  </div>
);

const PageNav = () => {
  const [page, setPage] = useState("1");

  return (
    <div className="flex h-7 shrink-0 items-start border-y border-[#8d8d99] bg-[#e4e4ee]">
      <div className="flex h-6 w-[88px] items-center justify-between pr-1.5 pl-2">
        {["M0 0H2V10H0ZM10 0V10L3 5Z", "M8 0V10L1 5Z", "M2 0V10L9 5Z", "M8 0H10V10H8ZM0 0V10L7 5Z"].map((d, i) => (
          <button key={d} aria-label={["First page", "Previous page", "Next page", "Last page"][i]}>
            <svg viewBox="0 0 10 10" className="size-2.5" aria-hidden="true"><path d={d} /></svg>
          </button>
        ))}
      </div>
      <input
        aria-label="Page number"
        value={page}
        onChange={(e) => setPage(e.target.value)}
        className="h-[22px] w-8 border border-t-0 border-gray-500 bg-white text-center text-gray-600"
      />
      <button className="ml-1.5 h-[26px] w-[43px] rounded-b-sm border border-t-0 border-[#d9a673] bg-linear-to-b from-[#fdc88e] to-[#ffb25c] font-semibold text-black">Page1</button>
      <button aria-label="New page" className="ml-px flex h-[26px] w-[31px] items-center justify-center rounded-b-sm border border-t-0 border-[#b8b8c0] bg-[#f0f0f4]">
        <svg viewBox="0 0 24 24" className="size-6" aria-hidden="true">
          <path d="M5 1H18L22 5V22H5Z" fill="#fff" stroke="#9a9aa4" />
          <path d="M18 1V5H22" fill="#ccc" stroke="#9a9aa4" />
          <path d="M7 0V14M0 7H14M2 2L12 12M12 2L2 12" stroke="#e8ae2e" strokeWidth="1.5" />
          <circle cx="7" cy="7" r="3.5" fill="#fbe08a" stroke="#e8ae2e" />
        </svg>
      </button>
      <input
        type="range"
        aria-label="Zoom level"
        defaultValue={0}
        className="mt-1 mr-[18px] ml-auto h-1 w-[114px] appearance-none border-y border-[#d2d2dc] bg-[#f1f1f7] [&::-webkit-slider-thumb]:h-2.5 [&::-webkit-slider-thumb]:w-[3px] [&::-webkit-slider-thumb]:appearance-none [&::-webkit-slider-thumb]:bg-[#2a5fc4]"
      />
      <button aria-label="Thumbnails" className="mt-1 mr-2.5 grid size-3.5 grid-cols-2 gap-0.5">
        <span className="bg-black" /><span className="bg-black" /><span className="bg-black" /><span className="bg-black" />
      </button>
    </div>
  );
};

const StatusBar = () => (
  <footer className="flex h-[29px] shrink-0 items-center border-b-2 border-black bg-[#e3e4ee] pt-1 pl-1 text-[#3a3a3a]">
    <span className="flex-1">Ready.</span>
    <div className="flex w-[931px] shrink-0">
      <span className="w-[75px]">X=+309,051</span>
      <span className="w-[75px]">Y=+126,932</span>
      <span className="w-[99px]">Z=+000,000</span>
      <span className="w-[44px]">3</span>
      <span>Visualization: 0,2mm 15°</span>
    </div>
  </footer>
);

const App = () => {
  return (
    <div className="flex h-screen min-w-[1280px] flex-col overflow-hidden bg-linear-to-r from-white via-[#e7e6ef] via-40% to-[#e4e4ee] font-['Open_Sans',sans-serif] text-[11px] text-[#333]">
      <svg className="absolute size-0" aria-hidden="true">
        <defs>
          <linearGradient id="paper" x1="0" y1="0" x2="1" y2="1">
            <stop offset="0" stopColor="#a9caf3" />
            <stop offset="1" stopColor="#eaf2ff" />
          </linearGradient>
          <radialGradient id="gold" cx=".4" cy=".35">
            <stop offset="0" stopColor="#fdeeb4" />
            <stop offset="1" stopColor="#e2a93c" />
          </radialGradient>
        </defs>
      </svg>
      <TitleBar />
      <Ribbon />
      <Toolbar />
      <div className="flex min-h-0 flex-1">
        <div className="flex min-w-0 flex-1 flex-col border-r border-[#8d8d99]">
          <DocumentTabs />
          <main className="relative flex min-h-0 flex-1 items-start justify-center overflow-hidden border-l border-[#5a5a66] bg-linear-to-b from-[#4a679c] via-[#93a1c0] via-50% to-[#e6e4e0] pt-[41px] pr-1.5">
            <Sheet />
            <ViewTools />
            <div className="absolute right-[84px] bottom-1 flex w-[54px] flex-col text-center text-xs text-[#222]">
              <span>20mm</span>
              <span className="h-2.5 border border-y-2 border-[#4a2a00] bg-[#ff9f33]" />
            </div>
            <span className="absolute top-[405px] -left-px h-[78px] w-1 border border-gray-600 bg-[#e8e8ee]" />
            <span className="absolute top-[405px] right-0 h-[78px] w-1 border border-gray-600 bg-[#e8e8ee]" />
          </main>
          <PageNav />
        </div>
        <aside className="w-[29px] shrink-0 pt-[3px] pl-[3px]">
          <button className="flex h-[147px] w-full flex-col items-center gap-1 border border-[#a8a8b0] bg-linear-to-r from-[#f0f0f3] to-[#c9c9cf]">
            <svg viewBox="0 0 24 26" className="h-[26px] w-6 shrink-0" aria-hidden="true">
              <path d="M2 6L16 2L23 18L10 24Z" fill="#fff" stroke="#99a" />
              <path d="M4 7L15 4L21 16L11 20Z" fill="#2a79e6" />
              <path d="M11 24L22 19L20 22L12 25Z" fill="#2b3442" />
            </svg>
            <span className="[writing-mode:vertical-rl]">Why TopSolid'Steel?</span>
          </button>
        </aside>
      </div>
      <StatusBar />
    </div>
  );
};

export default App;
